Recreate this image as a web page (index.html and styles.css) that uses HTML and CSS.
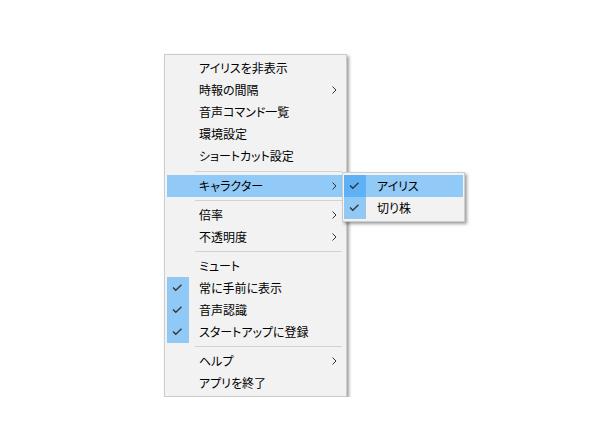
FILE: index.html
```html
<!DOCTYPE html>
<html lang="ja">
<head>
<meta charset="utf-8">
<title>Menu</title>
<link rel="stylesheet" href="styles.css">
</head>
<body>
<div class="stage">
  <div class="menu-wrap">
    <div class="menu main">
      <div class="item"><span class="check"></span><span class="label">アイリスを非表示</span></div>
      <div class="item"><span class="check"></span><span class="label">時報の間隔</span><svg class="arrow" width="5" height="8" viewBox="0 0 5 8"><polyline points="0.5,0.5 4,4 0.5,7.5" fill="none" stroke="#333" stroke-width="1"/></svg></div>
      <div class="item"><span class="check"></span><span class="label">音声コマンド一覧</span></div>
      <div class="item"><span class="check"></span><span class="label">環境設定</span></div>
      <div class="item"><span class="check"></span><span class="label">ショートカット設定</span></div>
      <div class="sep first"></div>
      <div class="item hover"><span class="check"></span><span class="label">キャラクター</span><svg class="arrow" width="5" height="8" viewBox="0 0 5 8"><polyline points="0.5,0.5 4,4 0.5,7.5" fill="none" stroke="#333" stroke-width="1"/></svg></div>
      <div class="sep"></div>
      <div class="item"><span class="check"></span><span class="label">倍率</span><svg class="arrow" width="5" height="8" viewBox="0 0 5 8"><polyline points="0.5,0.5 4,4 0.5,7.5" fill="none" stroke="#333" stroke-width="1"/></svg></div>
      <div class="item"><span class="check"></span><span class="label">不透明度</span><svg class="arrow" width="5" height="8" viewBox="0 0 5 8"><polyline points="0.5,0.5 4,4 0.5,7.5" fill="none" stroke="#333" stroke-width="1"/></svg></div>
      <div class="sep"></div>
      <div class="item"><span class="check"></span><span class="label">ミュート</span></div>
      <div class="item"><span class="check on"><svg width="22" height="22" viewBox="0 0 22 22"><polyline points="6,10.5 8.8,13.3 14.5,7.8" fill="none" stroke="#333" stroke-width="1.3"/></svg></span><span class="label">常に手前に表示</span></div>
      <div class="item"><span class="check on"><svg width="22" height="22" viewBox="0 0 22 22"><polyline points="6,10.5 8.8,13.3 14.5,7.8" fill="none" stroke="#333" stroke-width="1.3"/></svg></span><span class="label">音声認識</span></div>
      <div class="item"><span class="check on"><svg width="22" height="22" viewBox="0 0 22 22"><polyline points="6,10.5 8.8,13.3 14.5,7.8" fill="none" stroke="#333" stroke-width="1.3"/></svg></span><span class="label">スタートアップに登録</span></div>
      <div class="sep"></div>
      <div class="item"><span class="check"></span><span class="label">ヘルプ</span><svg class="arrow" width="5" height="8" viewBox="0 0 5 8"><polyline points="0.5,0.5 4,4 0.5,7.5" fill="none" stroke="#333" stroke-width="1"/></svg></div>
      <div class="item"><span class="check"></span><span class="label">アプリを終了</span></div>
    </div>
    <div class="menu sub">
      <div class="item hover"><span class="check on strong"><svg width="22" height="22" viewBox="0 0 22 22"><polyline points="6,10.5 8.8,13.3 14.5,7.8" fill="none" stroke="#333" stroke-width="1.3"/></svg></span><span class="label">アイリス</span></div>
      <div class="item"><span class="check on"><svg width="22" height="22" viewBox="0 0 22 22"><polyline points="6,10.5 8.8,13.3 14.5,7.8" fill="none" stroke="#333" stroke-width="1.3"/></svg></span><span class="label">切り株</span></div>
    </div>
  </div>
</div>
</body>
</html>
```
FILE: styles.css
```css
html, body {
  margin: 0;
  padding: 0;
  background: #ffffff;
}

.stage {
  padding: 54px 0 0 164px;
  font-family: "Noto Sans CJK JP", "Noto Sans", sans-serif;
  font-size: 12px;
  color: #000;
  font-feature-settings: "palt";
}

.menu-wrap {
  position: relative;
  width: 183px;
}

.menu {
  box-sizing: border-box;
  background: #f2f2f2;
  border: 1px solid #cccccc;
  box-shadow: 2px 2px 3px rgba(0, 0, 0, 0.38);
}

.main {
  width: 183px;
  padding: 2px;
}

.sub {
  position: absolute;
  left: 178px;
  top: 118px;
  width: 123px;
  padding: 2px 1px;
}

.item {
  display: flex;
  align-items: center;
  height: 22px;
}

.item.hover {
  background: #91c9f7;
}

.check {
  flex: none;
  width: 22px;
  height: 22px;
  display: flex;
}

.check.on {
  background: #90c8f6;
}

.check.strong {
  background: #5fb1f6;
}

.label {
  flex: 1;
  margin-left: 10px;
  line-height: 22px;
  white-space: nowrap;
}

.sub .label {
  margin-left: 11px;
}

.arrow {
  flex: none;
  margin-right: 7px;
}

.sep {
  height: 1px;
  background: #d2d2d2;
  margin: 3px 2px 3px 28px;
}

.sep.first {
  margin-top: 4px;
}
```
